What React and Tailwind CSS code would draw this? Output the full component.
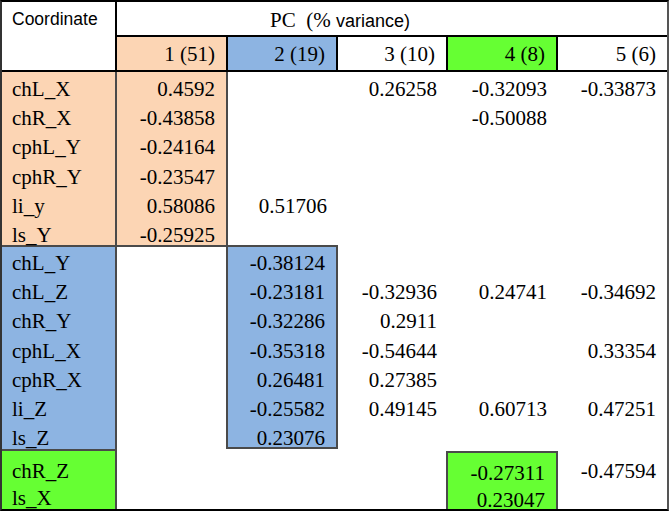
import React from "react";

const PEACH = "bg-[#fcd5b4]";
const BLUE = "bg-[#8db4e2]";
const GREEN = "bg-[#66ff33]";

const groups = [
  {
    h: "h-[175px]",
    pt: "pt-[3px]",
    lh: "h-[29.2px] leading-[29.2px]",
    labels: ["chL_X", "chR_X", "cphL_Y", "cphR_Y", "li_y", "ls_Y"],
    cols: [
      ["0.4592", "-0.43858", "-0.24164", "-0.23547", "0.58086", "-0.25925"],
      ["", "", "", "", "0.51706", ""],
      ["0.26258", "", "", "", "", ""],
      ["-0.32093", "-0.50088", "", "", "", ""],
      ["-0.33873", "", "", "", "", ""],
    ],
    cls: [
      `${PEACH} border-r-2 border-b-2 border-[#4a4a4a]`,
      `${PEACH} border-r-2 border-b-2 border-[#4a4a4a]`,
      "",
      "",
      "",
      "",
    ],
  },
  {
    h: "h-[204px]",
    pt: "pt-[2px]",
    lh: "h-[29.2px] leading-[29.2px]",
    labels: ["chL_Y", "chL_Z", "chR_Y", "cphL_X", "cphR_X", "li_Z", "ls_Z"],
    cols: [
      ["", "", "", "", "", "", ""],
      ["-0.38124", "-0.23181", "-0.32286", "-0.35318", "0.26481", "-0.25582", "0.23076"],
      ["", "-0.32936", "0.2911", "-0.54644", "0.27385", "0.49145", ""],
      ["", "0.24741", "", "", "", "0.60713", ""],
      ["", "-0.34692", "", "0.33354", "", "0.47251", ""],
    ],
    cls: [
      `${BLUE} border-r-2 border-b-2 border-[#4a4a4a]`,
      "",
      `${BLUE} border-l-2 border-r-2 border-b-2 border-t-2 border-[#4a4a4a] -ml-[2px] -mt-[2px]`,
      "",
      "",
      "",
    ],
  },
  {
    h: "h-[58px]",
    pt: "pt-[7px]",
    lh: "h-[26.5px] leading-[26.5px]",
    labels: ["chR_Z", "ls_X"],
    cols: [
      ["", ""],
      ["", ""],
      ["", ""],
      ["-0.27311", "0.23047"],
      ["-0.47594", ""],
    ],
    cls: [
      `${GREEN} border-r-2 border-[#4a4a4a]`,
      "",
      "",
      "",
      `${GREEN} border-l-2 border-r-2 border-t-2 border-[#4a4a4a] -ml-[2px]`,
      "",
    ],
  },
];

function Lines({ items, align, lh, pt }) {
  return (
    <div className={`${pt} ${align === "left" ? "pl-[10px] text-left" : "pr-[11px] text-right"}`}>
      {items.map((t, i) => (
        <div key={i} className={`${lh} whitespace-nowrap`}>
          {t || "\u00a0"}
        </div>
      ))}
    </div>
  );
}

export default function App() {
  const hdr = [
    { t: "1 (51)", c: PEACH },
    { t: "2 (19)", c: BLUE },
    { t: "3 (10)", c: "bg-white" },
    { t: "4 (8)", c: GREEN },
    { t: "5 (6)", c: "bg-white" },
  ];
  return (
    <div className="w-[669px] h-[511px] bg-white overflow-hidden">
      <div className="w-[669px] h-[511px] border-l-2 border-t-2 border-b-2 border-r-2 border-l-[#333] border-t-black border-b-black border-r-[#555] font-['Liberation_Serif',serif] text-[21px] text-black">
        <div className="grid grid-cols-[115px_111px_110px_110px_110px_109px]">
          {/* header */}
          <div className="row-span-2 h-[70px] border-r-2 border-b-2 border-black pl-[10px] pt-[3px] font-['Liberation_Sans',sans-serif] text-[17.5px] leading-[29px]">
            Coordinate
          </div>
          <div className="col-span-5 h-[35px] border-b-2 border-black pl-[153px] leading-[37px] whitespace-nowrap">
            <span>PC&nbsp;&nbsp;(%</span>{" "}
            <span className="font-['Liberation_Sans',sans-serif] text-[18px]">variance)</span>
          </div>
          {hdr.map((h, i) => (
            <div
              key={i}
              className={`h-[35px] border-b-2 border-black ${i < 4 ? "border-r-2" : ""} ${h.c} pr-[11px] text-right leading-[35px]`}
            >
              {h.t}
            </div>
          ))}
          {/* groups */}
          {groups.map((g, gi) => (
            <React.Fragment key={gi}>
              <div className={`${g.h} ${g.cls[0]}`}>
                <Lines items={g.labels} align="left" lh={g.lh} pt={g.pt} />
              </div>
              {g.cols.map((col, ci) => (
                <div key={ci} className={`${g.h} ${g.cls[ci + 1]}`}>
                  <Lines items={col} align="right" lh={g.lh} pt={g.pt} />
                </div>
              ))}
            </React.Fragment>
          ))}
        </div>
      </div>
    </div>
  );
}
